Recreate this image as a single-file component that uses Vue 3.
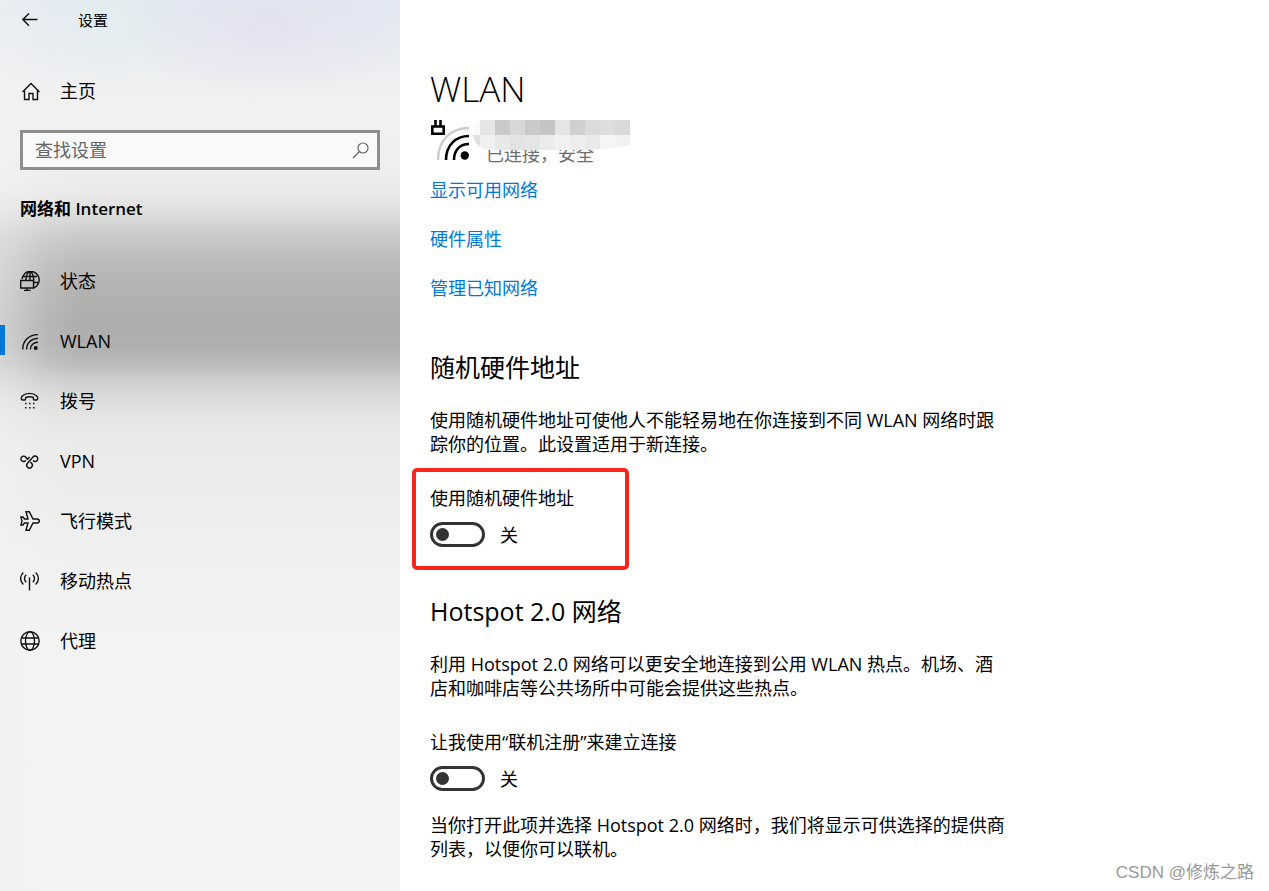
<script setup>
import { ref } from 'vue'

const query = ref('')
const current = ref('wlan')
const randomAddress = ref(false)
const onlineSignUp = ref(false)

const items = [
  { id: 'status', label: '状态' },
  { id: 'wlan', label: 'WLAN' },
  { id: 'dialup', label: '拨号' },
  { id: 'vpn', label: 'VPN' },
  { id: 'airplane', label: '飞行模式' },
  { id: 'hotspot', label: '移动热点' },
  { id: 'proxy', label: '代理' },
]

const topCells = ['#fafafa', '#e6e6e6', '#c9c9c9', '#d8d8d8', '#cacaca', '#c4c4c4', '#e5e5e5', '#d0d0d0', '#dbdbdb', '#dedede', '#d9d9d9']
const bottomCells = ['#e0e0e0', '#f0f0f0', '#e8e8e8', '#e3e3e3', '#e5e5e5', '#ececec', '#f1f1f1', '#eeeeee', '#e9e9e9', '#f5f5f5', '#f2f2f2']
</script>

<template>
  <div class="window">
    <aside class="sidebar">
      <header class="titlebar">
        <button class="back" type="button" aria-label="返回">
          <svg width="16" height="14" viewBox="0 0 16 14"><path d="M15.500 6.500H1M7 .5L.8 6.500L7 12.700" /></svg>
        </button>
        <span class="app-name">设置</span>
      </header>

      <a class="home" href="#home">
        <svg width="20" height="20" viewBox="0 0 20 20"><path d="M1.500 11L10 2.500L18.500 11M3.500 9.500V18.500H8V12.500H12V18.500H16.500V9.500" /></svg>
        <span>主页</span>
      </a>

      <div class="search">
        <input v-model="query" type="text" placeholder="查找设置" aria-label="查找设置" />
        <svg width="18" height="18" viewBox="0 0 18 18"><circle cx="11" cy="7" r="5" /><path d="M7.500 10.500L1 17" /></svg>
      </div>

      <h2 class="category">网络和 Internet</h2>

      <nav>
        <a
          v-for="item in items"
          :key="item.id"
          :href="'#' + item.id"
          :class="['nav-item', { active: current === item.id }]"
          @click.prevent="current = item.id"
        >
          <svg v-if="item.id === 'status'" width="20" height="20" viewBox="0 0 20 20">
            <path d="M2 8A8.600 8.600 0 1 1 13.500 17M3 5.500H17M13.500 11.500H18M6 9C6 4 8 .8 10 .8C12 .8 13.800 5 13.800 9.500M10 .8V9" />
            <path d="M.7 9.500H13.500V17H.7ZM7 17V19.500M4 19.500H10.500" />
          </svg>
          <svg v-else-if="item.id === 'wlan'" width="20" height="20" viewBox="0 0 20 20">
            <path d="M2.700 18.500C2.700 10 9 3.600 18 3.600M6.600 18.500C6.600 12 11.500 7.400 18 7.400M10.400 18.500C10.400 14 13.500 11.200 18 11.200" />
            <circle class="solid" cx="15.700" cy="17" r="2" />
          </svg>
          <svg v-else-if="item.id === 'dialup'" width="20" height="20" viewBox="0 0 20 20">
            <path d="M2.500 9C.6 8.500 1.300 6 2.200 5C6 1.500 13 1.500 16.800 5C17.700 6 18.400 8.500 16.500 9H14.500Q13.300 9 13.300 7.500V6.400C11 5.600 8 5.600 5.700 6.400V7.500Q5.700 9 4.500 9Z" />
            <path class="dots" d="M5 12.500H6.500M9 12.500H10.500M13 12.500H14.500M5 16.800H6.500M9 16.800H10.500M13 16.800H14.500" />
          </svg>
          <svg v-else-if="item.id === 'vpn'" width="20" height="20" viewBox="0 0 20 20">
            <path d="M5.700 9.500A2.700 2.700 0 1 1 5.600 6L7.500 8.300L9.500 6" />
            <path d="M13 9.500A2.700 2.700 0 1 0 13 6L7.500 12.300A2.800 2.800 0 1 0 11.600 12.300L10.300 11" />
          </svg>
          <svg v-else-if="item.id === 'airplane'" width="20" height="20" viewBox="0 0 20 20">
            <path d="M19.300 10Q19.300 8.200 17 8H13L9.300 .8H6L8 8H4.500L3 6H.9L2 10L.9 14H3L4.500 12H8L6 19.200H9.300L13 12H17Q19.300 11.800 19.300 10Z" />
          </svg>
          <svg v-else-if="item.id === 'hotspot'" width="20" height="20" viewBox="0 0 20 20">
            <path d="M3.300 1.500C-.3 5 -.3 10 3.300 13.500M15.700 1.500C19.300 5 19.300 10 15.700 13.500M6.200 3.800C3.900 6 3.900 9 6.200 11.200M12.800 3.800C15.100 6 15.100 9 12.800 11.200M9.500 6.500V19.500" />
          </svg>
          <svg v-else width="20" height="20" viewBox="0 0 20 20">
            <circle cx="10" cy="10" r="9.200" /><ellipse cx="10" cy="10" rx="4.500" ry="9.200" /><path d="M1.500 7H18.500M1.500 13H18.500" />
          </svg>
          <span>{{ item.label }}</span>
        </a>
      </nav>
    </aside>

    <main class="content">
      <h1>WLAN</h1>
      <div class="network">
        <svg class="signal" width="40" height="42" viewBox="0 0 40 42">
          <path class="plug" d="M2.300 8.500H13.700V15.700H2.300ZM5.500 2V8M10.500 2V8" />
          <path class="weak" d="M8 42C8 22 21 10 39 10" />
          <path class="strong" d="M16 42C16 27 26 18 39 18M24 42C24 31.500 30.500 26 39 26" />
          <circle cx="34.800" cy="37.500" r="4.200" />
        </svg>
        <span class="state">已连接，安全</span>
        <svg class="mosaic" width="158" height="30" viewBox="0 0 158 30" aria-hidden="true">
          <clipPath id="name-cover"><path d="M7 0H158V25C140 28 125 30 110 30H18C9 30 1 23 1 13C1 7 2 3 7 0Z" /></clipPath>
          <g clip-path="url(#name-cover)">
            <rect v-for="(fill, i) in topCells" :key="'t' + i" :x="i * 15 - 7" y="0" width="15" height="15" :fill="fill" />
            <rect v-for="(fill, i) in bottomCells" :key="'b' + i" :x="i * 15 - 7" y="15" width="15" height="15" :fill="fill" />
          </g>
        </svg>
      </div>

      <div class="links">
        <a href="#available">显示可用网络</a>
        <a href="#hardware">硬件属性</a>
        <a href="#known">管理已知网络</a>
      </div>

      <section>
        <h2>随机硬件地址</h2>
        <p>使用随机硬件地址可使他人不能轻易地在你连接到不同 WLAN 网络时跟踪你的位置。此设置适用于新连接。</p>
        <div class="setting marked">
          <label for="random-address">使用随机硬件地址</label>
          <div class="toggle-row">
            <input id="random-address" v-model="randomAddress" type="checkbox" role="switch" />
            <span>{{ randomAddress ? '开' : '关' }}</span>
          </div>
        </div>
      </section>

      <section class="hotspot">
        <h2>Hotspot 2.0 网络</h2>
        <p>利用 Hotspot 2.0 网络可以更安全地连接到公用 WLAN 热点。机场、酒店和咖啡店等公共场所中可能会提供这些热点。</p>
        <div class="setting">
          <label for="online-signup">让我使用“联机注册”来建立连接</label>
          <div class="toggle-row">
            <input id="online-signup" v-model="onlineSignUp" type="checkbox" role="switch" />
            <span>{{ onlineSignUp ? '开' : '关' }}</span>
          </div>
        </div>
        <p class="note">当你打开此项并选择 Hotspot 2.0 网络时，我们将显示可供选择的提供商列表，以便你可以联机。</p>
      </section>
    </main>

    <div class="watermark">CSDN @修炼之路</div>
  </div>
</template>

<style>
body {
  margin: 0;
  background: #fff;
}
</style>

<style scoped>
.window {
  display: flex;
  position: relative;
  min-height: 100vh;
  font-family: "Open Sans", "Noto Sans CJK SC", sans-serif;
  font-size: 18px;
  line-height: 24px;
  color: #000;
}
svg {
  flex: none;
  fill: none;
  stroke: #111;
  stroke-width: 1.4;
}
a {
  text-decoration: none;
}
.sidebar {
  flex: none;
  box-sizing: border-box;
  width: 400px;
  background:
    linear-gradient(90deg, rgba(241, 242, 242, 0.5) 0, rgba(241, 242, 242, 0.4) 15px, rgba(241, 242, 242, 0.15) 45px, transparent 80px),
    radial-gradient(ellipse 150px 80px at 270px 20px, rgba(224, 219, 236, 0.5), transparent),
    radial-gradient(ellipse 100px 70px at 110px 20px, rgba(228, 240, 236, 0.6), transparent),
    linear-gradient(#e2e9f2 0, #e7ebf2 40px, #eeeff1 80px, #f1f1f1 110px, #efefef 165px, #ebebeb 190px, #dededd 212px, #c9cac9 235px, #bbbcbb 260px, #b3b3b2 290px, #adadac 320px, #afafaf 345px, #bababa 363px, #cdcdcd 380px, #dadad9 396px, #e4e4e3 415px, #eaeae9 440px, #ececec 490px, #f0f0f0 560px, #f3f3f3 640px);
}
.titlebar {
  display: flex;
  align-items: center;
  height: 40px;
  font-size: 15px;
}
.back {
  display: flex;
  align-items: center;
  width: 78px;
  height: 40px;
  padding: 0 0 0 22px;
  border: 0;
  background: none;
}
.home {
  display: flex;
  align-items: center;
  gap: 19px;
  height: 60px;
  margin-top: 21px;
  padding-left: 21px;
  color: #000;
}
.search {
  display: flex;
  align-items: center;
  box-sizing: border-box;
  height: 40px;
  margin: 9px 20px 0;
  padding: 0 7px 0 12px;
  border: 3px solid #8e8e8e;
  background: rgba(255, 255, 255, 0.6);
}
.search input {
  flex: 1;
  min-width: 0;
  padding: 0;
  border: 0;
  outline: 0;
  background: none;
  font: inherit;
}
.search input::placeholder {
  color: #666;
  opacity: 1;
}
.search svg {
  stroke: #666;
  stroke-width: 1.2;
}
.category {
  margin: 27px 20px 30px;
  font-size: 17px;
  font-weight: 600;
  line-height: 24px;
}
.nav-item {
  display: flex;
  align-items: center;
  gap: 20px;
  position: relative;
  height: 60px;
  padding-left: 20px;
  color: #000;
}
.nav-item.active::before {
  content: "";
  position: absolute;
  left: 0;
  top: 14px;
  width: 5px;
  height: 30px;
  background: #0078d7;
}
.solid {
  fill: #111;
  stroke: none;
}
.dots {
  stroke-width: 1.5;
}
.content {
  flex: 1;
  min-width: 0;
  padding: 65px 30px 20px;
}
h1 {
  margin: 0;
  font-size: 35px;
  font-weight: 300;
  line-height: 48px;
}
.network {
  display: flex;
  align-items: flex-end;
  gap: 16px;
  position: relative;
  height: 48px;
  margin: 5px 0 12px;
}
.signal {
  position: relative;
  bottom: 6px;
}
.signal circle {
  fill: #000;
  stroke: none;
}
.plug {
  stroke: #000;
  stroke-width: 2.6;
}
.weak {
  stroke: #ccc;
  stroke-width: 2.4;
}
.strong {
  stroke: #000;
  stroke-width: 2.6;
}
.state {
  color: #6d6d6d;
}
.mosaic {
  position: absolute;
  left: 42px;
  top: 2px;
}
.mosaic rect {
  stroke: none;
}
.links {
  display: flex;
  flex-direction: column;
  align-items: flex-start;
  gap: 25px;
  margin-bottom: 50px;
}
.links a {
  color: #0078d7;
}
.content h2 {
  margin: 0;
  font-size: 25px;
  font-weight: 400;
  line-height: 34px;
}
.content p {
  max-width: 576px;
  margin: 24px 0;
}
.content .note {
  margin: 22px 0 0;
}
.hotspot {
  margin-top: 47px;
}
.setting {
  position: relative;
  margin-top: 30px;
}
.marked::after {
  content: "";
  position: absolute;
  left: -18px;
  top: -18px;
  width: 209px;
  height: 94px;
  border: 4px solid #fb2418;
  border-radius: 5px;
  pointer-events: none;
}
.toggle-row {
  display: flex;
  align-items: center;
  gap: 15px;
  margin-top: 12px;
}
.toggle-row input {
  appearance: none;
  display: flex;
  align-items: center;
  box-sizing: border-box;
  width: 55px;
  height: 25px;
  margin: 0;
  padding: 0 3px;
  border: 3px solid #333;
  border-radius: 13px;
  background: #fff;
}
.toggle-row input::before {
  content: "";
  width: 13px;
  height: 13px;
  border-radius: 50%;
  background: #333;
}
.toggle-row input:checked {
  justify-content: flex-end;
  border-color: #0078d7;
  background: #0078d7;
}
.toggle-row input:checked::before {
  background: #fff;
}
.watermark {
  position: absolute;
  right: 15px;
  bottom: 6px;
  font-family: "Liberation Sans", "Noto Sans CJK SC", sans-serif;
  font-size: 17px;
  white-space: nowrap;
  color: #999;
}
</style>
